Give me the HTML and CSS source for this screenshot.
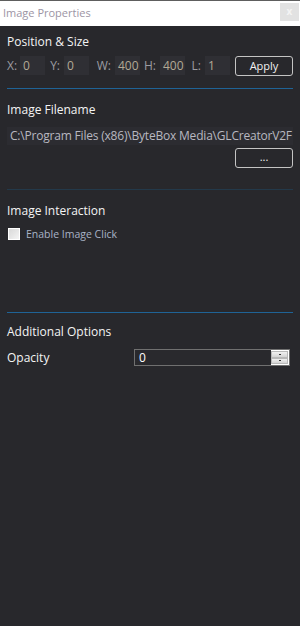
FILE: index.html
```html
<!DOCTYPE html>
<html>
<head>
<meta charset="utf-8">
<link rel="stylesheet" href="styles.css">
</head>
<body>
<div class="window">
  <div class="titlebar">
    <span class="title">Image Properties</span>
    <span class="close">x</span>
  </div>
  <div class="panel">
    <div class="heading h1">Position &amp; Size</div>
    <div class="coords">
      <span class="lbl l-x">X:</span><span class="num">0</span>
      <span class="lbl l-y">Y:</span><span class="num">0</span>
      <span class="lbl l-w">W:</span><span class="num">400</span>
      <span class="lbl l-h">H:</span><span class="num">400</span>
      <span class="lbl l-l">L:</span><span class="num">1</span>
      <span class="btn apply">Apply</span>
    </div>
    <div class="sep sep1"></div>

    <div class="heading h2">Image Filename</div>
    <div class="path">C:\Program Files (x86)\ByteBox Media\GLCreatorV2F</div>
    <div class="btnrow"><span class="btn dots">...</span></div>
    <div class="sep sep2"></div>

    <div class="heading h3">Image Interaction</div>
    <label class="check"><span class="box"></span><span class="ctext">Enable Image Click</span></label>
    <div class="sep sep3"></div>

    <div class="heading h4">Additional Options</div>
    <div class="opacity">
      <span class="olabel">Opacity</span>
      <div class="spin">
        <span class="spinval">0</span>
        <span class="spinbtns"><span class="sb"><i></i></span><span class="sb"><i></i></span></span>
      </div>
    </div>
  </div>
</div>
</body>
</html>
```

FILE: styles.css
```css
html, body {
  margin: 0;
  padding: 0;
  background: #28282c;
}
body {
  width: 300px;
  height: 626px;
  overflow: hidden;
  font-family: "Open Sans", "Noto Sans", sans-serif;
  font-size: 12px;
  color: #f2f2f2;
}
.window {
  height: 626px;
  background: #28282c;
}
.titlebar {
  height: 25px;
  background: #ffffff;
  border-top: 1px solid #5e5e5e;
  display: flex;
  align-items: flex-start;
  justify-content: space-between;
}
.title {
  font-size: 11px;
  line-height: 16px;
  margin: 4px 0 0 3px;
  color: #9c94a4;
}
.close {
  width: 19px;
  height: 18px;
  margin: 2px 1px 0 0;
  background: #e2e2e2;
  color: #f4f4f4;
  font-size: 10px;
  line-height: 17px;
  text-align: center;
  font-weight: bold;
}
.panel {
  padding: 0 7px;
}
.heading {
  line-height: 16px;
  height: 16px;
  color: #f4f4f4;
  font-size: 12px;
}
.h1 { margin-top: 8px; }
.coords {
  display: flex;
  align-items: center;
  margin-top: 6px;
  height: 19px;
}
.lbl {
  color: #9c9ca2;
  text-align: right;
  padding-right: 4px;
  box-sizing: border-box;
  line-height: 19px;
}
.l-x { width: 13px; text-align: left; }
.l-y { width: 19px; }
.l-w { width: 26px; }
.l-h { width: 20px; }
.l-l { width: 20px; }
.num {
  width: 25px;
  height: 19px;
  line-height: 19px;
  background: #2f2f34;
  color: #b3a994;
  padding-left: 3px;
  box-sizing: border-box;
}
.btn {
  display: flex;
  align-items: center;
  justify-content: center;
  width: 58px;
  height: 20px;
  box-sizing: border-box;
  border: 1px solid #c4c4c4;
  border-radius: 3px;
  color: #f0f0f0;
  font-size: 11px;
}
.apply { margin-left: 5px; }
.sep {
  height: 1px;
  background: #1f6396;
}
.sep1 { margin-top: 13px; }
.h2 { margin-top: 13px; }
.path {
  margin-top: 9px;
  height: 18px;
  line-height: 18px;
  background: #2c2c31;
  color: #b8b8c0;
  padding-left: 3px;
  white-space: nowrap;
  overflow: hidden;
  letter-spacing: -0.2px;
}
.btnrow {
  display: flex;
  justify-content: flex-end;
  margin-top: 3px;
}
.dots {
  line-height: 10px;
  align-items: flex-start;
  padding-top: 3px;
}
.sep2 {
  margin-top: 21px;
  background: #23394a;
}
.h3 { margin-top: 13px; }
.check {
  display: flex;
  align-items: center;
  margin-top: 8px;
  height: 14px;
}
.box {
  width: 12px;
  height: 12px;
  box-sizing: border-box;
  border: 1px solid #ffffff;
  background: linear-gradient(135deg, #d8d8d8, #f4f4f4);
  margin-left: 1px;
}
.ctext {
  margin-left: 6px;
  font-size: 10.5px;
  color: #a9b3c6;
  line-height: 14px;
}
.sep3 { margin-top: 71px; }
.h4 { margin-top: 11px; }
.opacity {
  display: flex;
  align-items: center;
  justify-content: space-between;
  margin-top: 9px;
  height: 17px;
}
.olabel {
  line-height: 16px;
  color: #f4f4f4;
}
.spin {
  width: 156px;
  height: 17px;
  box-sizing: border-box;
  border: 1px solid #707070;
  background: #29292d;
  display: flex;
  margin-right: 3px;
}
.spinval {
  flex: 1;
  color: #ffffff;
  line-height: 15px;
  padding-left: 4px;
}
.spinbtns {
  width: 18px;
  display: flex;
  flex-direction: column;
  background: #ffffff;
  padding: 1px 1px 1px 0;
  box-sizing: border-box;
}
.sb {
  flex: 1;
  background: linear-gradient(#f0f0f0, #d4d4d4);
  border: 1px solid #b8b8b8;
  display: flex;
  align-items: center;
  justify-content: center;
}
.sb i {
  width: 2px;
  height: 1px;
  background: #333;
}
```
